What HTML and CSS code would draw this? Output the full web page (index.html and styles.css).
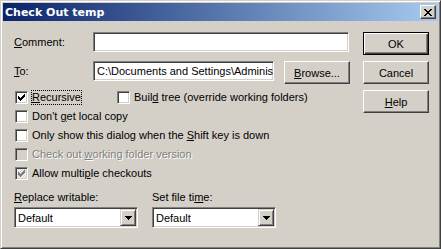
FILE: index.html
```html
<!DOCTYPE html>
<html>
<head>
	<meta charset="UTF-8">
	<title>Check Out temp</title>
	<link rel="stylesheet" href="styles.css">
</head>
<body>
<div class="window">
	<div class="titlebar">
		<span class="title">Check Out temp</span>
		<span class="close">
			<svg width="8" height="7" viewBox="0 0 8 7" shape-rendering="crispEdges">
				<path d="M0 0h2v1h-2zM6 0h2v1h-2zM1 1h2v1h-2zM5 1h2v1h-2zM2 2h4v1h-4zM3 3h2v1h-2zM2 4h4v1h-4zM1 5h2v1h-2zM5 5h2v1h-2zM0 6h2v1h-2zM6 6h2v1h-2z" fill="#000"/>
			</svg>
		</span>
	</div>
	<div class="client">
		<div class="form">
			<div class="field">
				<span class="label"><u>C</u>omment:</span>
				<div class="edit edit-comment"></div>
			</div>
			<div class="field field-to">
				<span class="label"><u>T</u>o:</span>
				<div class="edit edit-to">C:\Documents and Settings\Adminis</div>
				<div class="btn btn-browse"><u>B</u>rowse...</div>
			</div>

			<div class="checks">
				<div class="check-line">
					<div class="check check-first">
						<span class="box">
							<svg width="9" height="9" viewBox="0 0 9 9" shape-rendering="crispEdges"><path d="M1 3h1v3h-1zM2 4h1v3h-1zM3 5h1v3h-1zM4 4h1v3h-1zM5 3h1v3h-1zM6 2h1v3h-1zM7 1h1v3h-1z" fill="#000"/></svg>
						</span>
						<span class="text focus"><u>R</u>ecursive</span>
					</div>
					<div class="check">
						<span class="box"></span>
						<span class="text">Buil<u>d</u> tree (override working folders)</span>
					</div>
				</div>
				<div class="check">
					<span class="box"></span>
					<span class="text">Don't <u>g</u>et local copy</span>
				</div>
				<div class="check">
					<span class="box"></span>
					<span class="text">Only show this dialog when the <u>S</u>hift key is down</span>
				</div>
				<div class="check disabled">
					<span class="box"></span>
					<span class="text">Check out <u>w</u>orking folder version</span>
				</div>
				<div class="check">
					<span class="box box-grey">
						<svg width="9" height="9" viewBox="0 0 9 9" shape-rendering="crispEdges"><path d="M1 3h1v3h-1zM2 4h1v3h-1zM3 5h1v3h-1zM4 4h1v3h-1zM5 3h1v3h-1zM6 2h1v3h-1zM7 1h1v3h-1z" fill="#808080"/></svg>
					</span>
					<span class="text">Allow multi<u>p</u>le checkouts</span>
				</div>
			</div>

			<div class="combos">
				<div class="combo-group">
					<div class="combo-label"><u>R</u>eplace writable:</div>
					<div class="combo">
						<span>Default</span>
						<span class="drop"><svg width="7" height="4" viewBox="0 0 7 4" shape-rendering="crispEdges"><path d="M0 0h7v1h-7zM1 1h5v1h-5zM2 2h3v1h-3zM3 3h1v1h-1z" fill="#000"/></svg></span>
					</div>
				</div>
				<div class="combo-group">
					<div class="combo-label">Set file ti<u>m</u>e:</div>
					<div class="combo">
						<span>Default</span>
						<span class="drop"><svg width="7" height="4" viewBox="0 0 7 4" shape-rendering="crispEdges"><path d="M0 0h7v1h-7zM1 1h5v1h-5zM2 2h3v1h-3zM3 3h1v1h-1z" fill="#000"/></svg></span>
					</div>
				</div>
			</div>
		</div>

		<div class="actions">
			<div class="btn btn-default">OK</div>
			<div class="btn">Cancel</div>
			<div class="btn"><u>H</u>elp</div>
		</div>
	</div>
</div>
</body>
</html>
```

FILE: styles.css
```css
* {
	box-sizing: border-box;
}
body {
	margin: 0;
	background: #d4d0c8;
	font-family: "Liberation Sans", Arial, sans-serif;
	font-size: 11px;
	color: #000;
}
u {
	text-decoration: underline;
	text-underline-offset: 1px;
}

/* window frame */
.window {
	width: 441px;
	height: 249px;
	border: 1px solid;
	border-color: #d4d0c8 #404040 #404040 #d4d0c8;
	box-shadow: inset 1px 1px #fff, inset -1px -1px #808080;
	padding: 2px;
	display: flex;
	flex-direction: column;
}
.titlebar {
	height: 18px;
	flex: none;
	background: linear-gradient(to right, #0a246a, #a6caf0);
	display: flex;
	align-items: center;
	justify-content: space-between;
	padding: 0 2px;
}
.title {
	color: #fff;
	font-family: "DejaVu Sans", Verdana, sans-serif;
	font-weight: bold;
	font-size: 11px;
}
.close {
	width: 16px;
	height: 14px;
	background: #d4d0c8;
	border: 1px solid;
	border-color: #fff #404040 #404040 #fff;
	box-shadow: inset -1px -1px #808080;
	display: flex;
	align-items: center;
	justify-content: center;
	padding-right: 1px;
}

.client {
	flex: 1;
	display: flex;
	padding: 11px 9px 0 11px;
}
.form {
	flex: 1;
}
.actions {
	width: 66px;
	margin-left: 13px;
	display: flex;
	flex-direction: column;
	gap: 6px;
}

/* buttons */
.btn {
	height: 23px;
	width: 66px;
	border: 1px solid;
	border-color: #fff #404040 #404040 #fff;
	box-shadow: inset -1px -1px #808080;
	display: flex;
	align-items: center;
	justify-content: center;
}
.btn-default {
	border-color: #000;
	box-shadow: inset 1px 1px #fff, inset -1px -1px #404040, inset -2px -2px #808080;
}

/* edit fields */
.field {
	display: flex;
	align-items: center;
}
.label {
	width: 79px;
	flex: none;
}
.edit {
	height: 20px;
	background: #fff;
	border: 1px solid;
	border-color: #808080 #fff #fff #808080;
	box-shadow: inset 1px 1px #404040, inset -1px -1px #d4d0c8;
	padding: 0 3px;
	display: flex;
	align-items: center;
	white-space: nowrap;
	overflow: hidden;
}
.edit-comment {
	width: 256px;
}
.field-to {
	margin-top: 9px;
	align-items: flex-start;
}
.field-to .label {
	line-height: 20px;
}
.edit-to {
	width: 181px;
}
.btn-browse {
	margin-left: 10px;
}

/* checkboxes */
.checks {
	margin-top: 4px;
}
.check-line {
	display: flex;
}
.check {
	display: flex;
	align-items: center;
	height: 19px;
}
.check-first {
	width: 102px;
}
.box {
	width: 13px;
	height: 13px;
	margin-left: 1px;
	margin-right: 3px;
	background: #fff;
	border: 1px solid;
	border-color: #808080 #fff #fff #808080;
	box-shadow: inset 1px 1px #404040, inset -1px -1px #d4d0c8;
	display: flex;
	align-items: center;
	justify-content: center;
	flex: none;
}
.box-grey {
	background: repeating-conic-gradient(#d4d0c8 0 25%, #fff 0 50%) 0 0 / 2px 2px;
}
.text {
	border: 1px solid transparent;
	white-space: nowrap;
	line-height: 13px;
}
.focus {
	border: 1px dotted #000;
}
.disabled .box {
	background: #d4d0c8;
}
.disabled .text {
	color: #808080;
	text-shadow: 1px 1px #fff;
}

/* combos */
.combos {
	display: flex;
	gap: 14px;
	margin-top: 8px;
}
.combo-group {
	width: 124px;
}
.combo-label {
	line-height: 13px;
	margin-bottom: 3px;
}
.combo {
	height: 21px;
	background: #fff;
	border: 1px solid;
	border-color: #808080 #fff #fff #808080;
	box-shadow: inset 1px 1px #404040, inset -1px -1px #d4d0c8;
	padding: 1px 1px 1px 3px;
	display: flex;
	align-items: center;
	justify-content: space-between;
}
.drop {
	width: 16px;
	height: 17px;
	background: #d4d0c8;
	border: 1px solid;
	border-color: #d4d0c8 #404040 #404040 #d4d0c8;
	box-shadow: inset 1px 1px #fff, inset -1px -1px #808080;
	display: flex;
	align-items: center;
	justify-content: center;
}
```
